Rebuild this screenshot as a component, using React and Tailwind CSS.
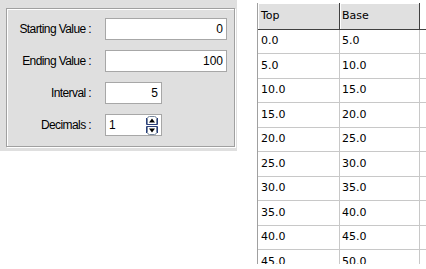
import React from "react";

const ui = { fontFamily: '"Liberation Sans", Arial, sans-serif' };
const grid = { fontFamily: '"DejaVu Sans", Verdana, sans-serif' };

function Spinner() {
  return (
    <svg width="14" height="19" viewBox="0 0 14 19" className="block">
      <path d="M2.5 8.5 V2.5 Q2.5 0.5 4.5 0.5 H9.5 Q11.5 0.5 11.5 2.5 V8.5" fill="none" stroke="#7a8aa0" />
      <path d="M1.5 2 V8.5 H12.5 V2" fill="none" stroke="#2a3f7a" />
      <path d="M7 2.5 L10 6.5 H4 Z" fill="#000" />
      <path d="M2.5 10.5 V16.5 Q2.5 18.5 4.5 18.5 H9.5 Q11.5 18.5 11.5 16.5 V10.5" fill="none" stroke="#7a8aa0" />
      <path d="M1.5 17 V10.5 H12.5 V17" fill="none" stroke="#2a3f7a" />
      <path d="M4 12.5 H10 L7 16.5 Z" fill="#000" />
    </svg>
  );
}

function Row({ label, children }) {
  return (
    <div className="flex items-center h-[22px]">
      <div className="w-[84px] text-right text-[12px] tracking-[-0.6px] text-black leading-none" style={ui}>
        {label}
      </div>
      <div className="ml-[14px]">{children}</div>
    </div>
  );
}

function Field({ value, w }) {
  return (
    <div
      className={`${w} h-[22px] bg-white border border-[#a7a7a7] flex items-center justify-end pr-[3px] text-[12px] text-black`}
      style={ui}
    >
      {value}
    </div>
  );
}

const rows = [
  ["0.0", "5.0", "h-[24px]"],
  ["5.0", "10.0", "h-[25px]"],
  ["10.0", "15.0", "h-[24px]"],
  ["15.0", "20.0", "h-[25px]"],
  ["20.0", "25.0", "h-[24px]"],
  ["25.0", "30.0", "h-[25px]"],
  ["30.0", "35.0", "h-[24px]"],
  ["35.0", "40.0", "h-[25px]"],
  ["40.0", "45.0", "h-[24px]"],
  ["45.0", "50.0", "h-[25px]"],
];

export default function App() {
  return (
    <div className="w-[426px] h-[269px] bg-white flex items-start overflow-hidden">
      <div className="w-[237px] h-[151px] bg-[#dfdfdf] pt-[8px] pl-[6px] shrink-0">
        <div className="w-[229px] h-[139px] border border-[#a0a0a0] shadow-[inset_1px_1px_0_#ffffff,1px_1px_0_#ffffff] pt-[9px] flex flex-col gap-[10px]">
          <Row label="Starting Value :">
            <Field value="0" w="w-[122px]" />
          </Row>
          <Row label="Ending Value :">
            <Field value="100" w="w-[122px]" />
          </Row>
          <Row label="Interval :">
            <Field value="5" w="w-[57px]" />
          </Row>
          <Row label="Decimals :">
            <div
              className="w-[57px] h-[22px] bg-white border border-[#a7a7a7] flex items-center justify-between pl-[3px] pr-[2px] text-[12px] text-black"
              style={ui}
            >
              <span>1</span>
              <Spinner />
            </div>
          </Row>
        </div>
      </div>

      <div className="ml-[20px] mt-[3px] h-[261px] overflow-hidden flex-1 border-l border-[#a0a0a0] text-[11px] text-black" style={grid}>
        <div className="flex h-[27px] border-b border-[#404040]">
          <div className="w-[82px] bg-[#e0e0e0] border-r border-[#404040] shadow-[inset_1px_1px_0_#ffffff] flex items-center pl-[3px]">
            Top
          </div>
          <div className="w-[80px] bg-[#e0e0e0] border-r border-[#404040] shadow-[inset_1px_1px_0_#ffffff] flex items-center pl-[2px]">
            Base
          </div>
          <div className="flex-1 bg-white" />
        </div>
        {rows.map(([a, b, h]) => (
          <div key={a} className={`flex ${h} shrink-0 border-b border-[#c8c8c8]`}>
            <div className="w-[82px] border-r border-[#c8c8c8] flex items-center pl-[3px]">{a}</div>
            <div className="w-[80px] border-r border-[#c8c8c8] flex items-center pl-[2px]">{b}</div>
            <div className="flex-1" />
          </div>
        ))}
      </div>
    </div>
  );
}
